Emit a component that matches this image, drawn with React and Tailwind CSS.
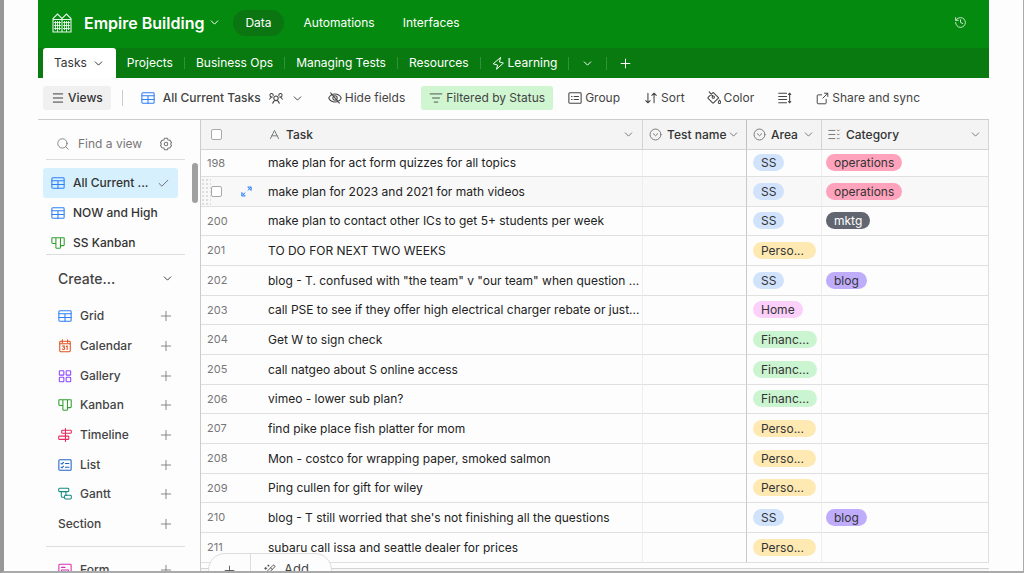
import React from 'react';
import { useState } from 'react';
import clsx from 'clsx';
import { Check, ChevronDown, History, ListFilter, Menu, Plus, Search, WandSparkles } from 'lucide-react';

const Svg = ({ size = 14, className, children }) => (
  <svg
    width={size}
    height={size}
    viewBox="0 0 16 16"
    fill="none"
    stroke="currentColor"
    strokeWidth="1.2"
    strokeLinecap="round"
    strokeLinejoin="round"
    className={clsx('shrink-0', className)}
    aria-hidden="true"
  >
    {children}
  </svg>
);

const BuildingIcon = () => (
  <svg width="20" height="20" viewBox="0 0 20 20" fill="none" stroke="currentColor" strokeWidth="1.1" className="shrink-0 opacity-90" aria-hidden="true">
    <path d="M1 19V5.500L5.500 1 10 5.500 14.500 1 19 5.500V19ZM10 5.500V19M1 6.500h18" />
    <path d="M3.500 8v9M5.500 8v11M7.500 8v9M12.500 8v9M14.500 8v11M16.500 8v9" strokeWidth="0.9" />
    <path d="M2 9.500h7M2 12.500h7M2 15.500h7M11 9.500h7M11 12.500h7M11 15.500h7" strokeWidth="0.9" />
  </svg>
);

const GridIcon = (props) => (
  <Svg {...props}>
    <rect x="1" y="2" width="14" height="12" rx="1" />
    <path d="M1 5.500h14M1 9.800h14M8 5.500V14" />
  </Svg>
);

const CalendarIcon = (props) => (
  <Svg {...props}>
    <rect x="2" y="2.500" width="12" height="12" rx="1" />
    <path d="M2 5.500h12M5 1v3M11 1v3M5 8h2.500L6.500 9.500c1.500 0 1.500 2.500-.2 2.500-.7 0-1.100-.2-1.300-.6M9.500 8.500l1-.7V12" />
  </Svg>
);

const GalleryIcon = (props) => (
  <Svg {...props}>
    <rect x="1.500" y="2" width="5.200" height="5" rx="0.800" />
    <rect x="9.300" y="2" width="5.200" height="5" rx="0.800" />
    <rect x="1.500" y="9.500" width="5.200" height="5" rx="0.800" />
    <rect x="9.300" y="9.500" width="5.200" height="5" rx="0.800" />
  </Svg>
);

const KanbanIcon = (props) => (
  <Svg {...props}>
    <path d="M1.500 2h13a.6.6 0 0 1 .6.6V10a1 1 0 0 1-1 1h-3.300V2M5.600 2v6.500H2a1 1 0 0 1-1-1V2.600A.6.6 0 0 1 1.500 2M5.600 8.500V13a1 1 0 0 0 1 1h3.200a1 1 0 0 0 1-1v-2" />
  </Svg>
);

const TimelineIcon = (props) => (
  <Svg {...props}>
    <path d="M8.500 .6v14.800M8.500 2.500H5a.8.8 0 0 0-.8.8v1.900a.8.8 0 0 0 .8.8h9.400a.8.8 0 0 0 .8-.8V3.300a.8.8 0 0 0-.8-.8H8.500" />
    <rect x="0.800" y="9.300" width="11.500" height="3.700" rx="0.800" />
  </Svg>
);

const ListIcon = (props) => (
  <Svg {...props}>
    <rect x="1" y="2" width="14" height="12" rx="1" />
    <path d="M3.500 6.200l1 .9 1.800-2M3.500 10.500l1 .9 1.800-2M8.500 6.300h4M8.500 10.500h4" />
  </Svg>
);

const GanttIcon = (props) => (
  <Svg {...props}>
    <rect x="0.800" y="1.500" width="11.500" height="3.800" rx="1" />
    <rect x="7.500" y="9.500" width="7.700" height="4.200" rx="1" />
    <path d="M3.800 5.300v5.300a1 1 0 0 0 1 1h2.700M9 5.300v3.200a1 1 0 0 0 1 1" />
  </Svg>
);

const FormIcon = (props) => (
  <Svg {...props}>
    <rect x="1" y="1.500" width="14" height="13" rx="1" />
    <path d="M4 5h4M4 8h8v3H4z" />
  </Svg>
);

const PeopleIcon = (props) => (
  <Svg {...props}>
    <circle cx="8" cy="8.300" r="2.500" />
    <path d="M4.300 14c.5-2 1.900-3.200 3.700-3.200s3.200 1.200 3.700 3.200M4.800 5.100A1.900 1.900 0 1 0 2.600 6.700M11.200 5.100a1.900 1.900 0 1 1 2.200 1.600M.8 9.300C1.300 7.600 2.200 6.800 3.900 6.800M15.200 9.300c-.5-1.700-1.400-2.500-3.100-2.500" />
  </Svg>
);

const HiddenIcon = (props) => (
  <Svg {...props}>
    <path d="M.8 8C2.300 5 4.900 3.400 8 3.400S13.700 5 15.200 8c-1.500 3-4.100 4.600-7.200 4.600S2.300 11 .8 8ZM3 2.200l10 11.600" />
    <circle cx="8" cy="8" r="2.500" />
  </Svg>
);

const GroupIcon = (props) => (
  <Svg {...props}>
    <rect x="1" y="2" width="14" height="12" rx="1" />
    <path d="M4 6.200h.7M7 6.200h5M4 9.700h.7M7 9.700h5" />
  </Svg>
);

const SortIcon = (props) => (
  <Svg {...props}>
    <path d="M4.500 2.500v11M2 11l2.500 2.500L7 11M11.500 13.500v-11M9 5l2.500-2.500L14 5" />
  </Svg>
);

const ColorIcon = (props) => (
  <Svg {...props}>
    <path d="M7.300 1.800l6 6L7.500 13.600a.8.8 0 0 1-1.100 0L1.300 8.500a.8.8 0 0 1 0-1.100l5.400-5.600a.5.5 0 0 1 .6 0ZM2.500 1l4 4.500" />
    <circle cx="7.200" cy="7" r="1.300" />
    <path d="M14.300 10.300c.9 1.300 1.300 2 1.300 2.700a1.300 1.300 0 0 1-2.600 0c0-.7.400-1.400 1.300-2.700Z" />
  </Svg>
);

const RowHeightIcon = (props) => (
  <Svg {...props}>
    <path d="M.8 2.500h9M.8 6.200h9M.8 9.800h9M.8 13.500h9M13.300 2.500v11M12 4l1.300-1.500L14.600 4M12 12l1.300 1.500 1.300-1.500" />
  </Svg>
);

const ShareIcon = (props) => (
  <Svg {...props}>
    <path d="M7 3.500H2.500a1 1 0 0 0-1 1v9a1 1 0 0 0 1 1h9a1 1 0 0 0 1-1V9M10.500 1.500h4v4M14.500 1.500L8.500 7.500" />
  </Svg>
);

const BoltIcon = (props) => (
  <Svg {...props}>
    <path d="M10.500 1L9 6l5 1.500L5.500 15 7 10 2 8.500Z" />
  </Svg>
);

const GearIcon = (props) => (
  <Svg {...props}>
    <path d="M6.300 1.500h3.400l.7 1.900 2 .2 1.900 2.800-1 1.600 1 1.700-1.900 2.700-2 .2-.7 1.900H6.300l-.7-1.900-2-.2-1.900-2.700 1-1.700-1-1.600 1.900-2.800 2-.2Z" />
    <circle cx="8" cy="8" r="2" />
  </Svg>
);

const SelectIcon = (props) => (
  <Svg {...props}>
    <circle cx="8" cy="8" r="6.700" />
    <path d="M5.300 7L8 9.600 10.700 7" />
  </Svg>
);

const MultiSelectIcon = (props) => (
  <Svg {...props}>
    <path d="M1 3h7.500M1 8h7.500M1 13h7.500M11.500 2.500l1.200 1.200 1.200-1.200M11.500 7.500l1.200 1.200 1.200-1.200M11.500 12.500l1.200 1.200 1.200-1.200" />
  </Svg>
);

const TextFieldIcon = (props) => (
  <Svg {...props}>
    <path d="M3 13L8 3l5 10M4.700 9.600h6.600" />
  </Svg>
);

const ExpandIcon = (props) => (
  <Svg {...props}>
    <path d="M10 2.500h3.800v3.800Z M13.300 3L9.800 6.500M6 13.500H2.200V9.700ZM2.700 13l3.500-3.500" />
  </Svg>
);

const Chevron = ({ size = 13, className }) => (
  <ChevronDown size={size} strokeWidth={1.8} className={clsx('shrink-0', className)} />
);

const tabs = ['Projects', 'Business Ops', 'Managing Tests', 'Resources'];

const views = [
  { name: 'All Current ...', icon: GridIcon, color: 'text-[#2d7ff9]' },
  { name: 'NOW and High', icon: GridIcon, color: 'text-[#2d7ff9]' },
  { name: 'SS Kanban', icon: KanbanIcon, color: 'text-[#2f9e2b]' },
];

const createItems = [
  { name: 'Grid', icon: GridIcon, color: 'text-[#2d7ff9]' },
  { name: 'Calendar', icon: CalendarIcon, color: 'text-[#e0501c]' },
  { name: 'Gallery', icon: GalleryIcon, color: 'text-[#8b46ff]' },
  { name: 'Kanban', icon: KanbanIcon, color: 'text-[#2f9e2b]' },
  { name: 'Timeline', icon: TimelineIcon, color: 'text-[#e5295f]' },
  { name: 'List', icon: ListIcon, color: 'text-[#1f62c9]' },
  { name: 'Gantt', icon: GanttIcon, color: 'text-[#168a85]' },
  { name: 'Section' },
];

const areas = {
  SS: 'bg-[#d0e2fc]',
  'Perso...': 'bg-[#ffe9b3] min-w-[63px]',
  'Financ...': 'bg-[#cbf5d1] min-w-[63px]',
  Home: 'bg-[#fbd0fb]',
};

const categories = {
  operations: 'bg-[#ffa3bd] text-[#333]',
  mktg: 'bg-[#616670] text-white',
  blog: 'bg-[#bfadfc] text-[#333]',
};

const rows = [
  { id: 198, task: 'make plan for act form quizzes for all topics', area: 'SS', category: 'operations' },
  { id: 199, task: 'make plan for 2023 and 2021 for math videos', area: 'SS', category: 'operations' },
  { id: 200, task: 'make plan to contact other ICs to get 5+ students per week', area: 'SS', category: 'mktg' },
  { id: 201, task: 'TO DO FOR NEXT TWO WEEKS', area: 'Perso...' },
  { id: 202, task: 'blog - T. confused with "the team" v "our team" when question ...', area: 'SS', category: 'blog' },
  { id: 203, task: 'call PSE to see if they offer high electrical charger rebate or just...', area: 'Home' },
  { id: 204, task: 'Get W to sign check', area: 'Financ...' },
  { id: 205, task: 'call natgeo about S online access', area: 'Financ...' },
  { id: 206, task: 'vimeo - lower sub plan?', area: 'Financ...' },
  { id: 207, task: 'find pike place fish platter for mom', area: 'Perso...' },
  { id: 208, task: 'Mon - costco for wrapping paper, smoked salmon', area: 'Perso...' },
  { id: 209, task: 'Ping cullen for gift for wiley', area: 'Perso...' },
  { id: 210, task: "blog - T still worried that she's not finishing all the questions", area: 'SS', category: 'blog' },
  { id: 211, task: 'subaru call issa and seattle dealer for prices', area: 'Perso...' },
];

const checkbox = 'block size-[11px] appearance-none rounded-[2px] border border-[#a8a8a8] bg-white checked:bg-[#2d7ff9]';

const Pill = ({ className, children }) => (
  <span className={clsx('block w-fit rounded-full px-2 text-[12px] leading-[17px]', className)}>
    {children}
  </span>
);

const TopBar = () => (
  <header className="flex h-12 items-center bg-[#048a0e] pr-[22px] pb-[3px] pl-[14px] text-[12px] text-white">
    <BuildingIcon />
    <button className="ml-3 flex items-center gap-1">
      <h1 className="text-[16px] font-semibold">Empire Building</h1>
      <Chevron />
    </button>
    <nav className="ml-3 flex items-center">
      <a href="#data" className="mr-5 rounded-full bg-[#0a7511] px-3 py-1 leading-[18px]">Data</a>
      <a href="#automations" className="mr-7">Automations</a>
      <a href="#interfaces">Interfaces</a>
    </nav>
    <button className="ml-auto" aria-label="History">
      <History size={13} strokeWidth={1.8} className="opacity-80" />
    </button>
  </header>
);

const TabBar = () => (
  <div className="flex h-[30px] items-center bg-[#097a0f] pl-[5px] text-[12px] text-white">
    <button className="flex h-full items-center gap-[5px] rounded-t-[3px] bg-white px-[11px] text-[#333]">
      Tasks
      <Chevron />
    </button>
    <div className="flex items-center divide-x divide-[#2f9435]">
      {tabs.map((tab) => (
        <button key={tab} className="px-[11px] leading-3">{tab}</button>
      ))}
      <button className="flex items-center gap-[3px] px-[11px] leading-3">
        <BoltIcon size={13} />
        Learning
      </button>
      <button className="px-3" aria-label="More tables"><Chevron /></button>
      <button className="px-[11px]" aria-label="Add table"><Plus size={15} strokeWidth={1.6} /></button>
    </div>
  </div>
);

const Toolbar = () => (
  <div className="flex h-[41px] items-center pb-px pl-[5px] text-[12px] text-[#444]">
    <button className="flex h-6 items-center gap-[3px] rounded-[3px] bg-[#f0f0f0] px-2 font-medium text-[#333]">
      <Menu size={14} strokeWidth={1.6} />
      Views
    </button>
    <div className="ml-[11px] h-4 w-px bg-[#ccc]" />
    <button className="ml-[18px] flex items-center gap-2 font-medium">
      <GridIcon className="text-[#2d7ff9]" />
      All Current Tasks
      <PeopleIcon />
      <Chevron />
    </button>
    <button className="ml-6 flex items-center gap-[3px]"><HiddenIcon />Hide fields</button>
    <button className="ml-4 flex h-6 items-center gap-[3px] rounded-[3px] bg-[#cff5d1] px-2">
      <ListFilter size={14} strokeWidth={1.5} />
      Filtered by Status
    </button>
    <button className="ml-[15px] flex items-center gap-[3px]"><GroupIcon />Group</button>
    <button className="ml-6 flex items-center gap-[3px]"><SortIcon />Sort</button>
    <button className="ml-[22px] flex items-center gap-[3px]"><ColorIcon />Color</button>
    <button className="ml-6" aria-label="Row height"><RowHeightIcon /></button>
    <button className="ml-6 flex items-center gap-[3px]"><ShareIcon size={13} />Share and sync</button>
  </div>
);

const CreateRow = ({ name, icon: Icon, color }) => (
  <li className="h-[30px] nth-[3n]:h-[29px]">
    <button className="flex h-full w-full items-center gap-2">
      {Icon && <Icon className={color} />}
      {name}
      <Plus size={16} strokeWidth={1.3} className="ml-auto text-[#777]" />
    </button>
  </li>
);

const Sidebar = () => {
  const [search, setSearch] = useState('');
  const [active, setActive] = useState(0);

  return (
    <aside className="relative w-[163px] shrink-0 overflow-hidden border-r border-[#ccc] text-[12px] text-[#444]">
      <div className="mr-[15px] ml-2 flex h-10 items-center border-b border-[#ddd] pt-2 pr-3 pl-[10px]">
        <Search size={14} strokeWidth={1.5} className="shrink-0 text-[#777]" />
        <input
          type="text"
          aria-label="Find a view"
          placeholder="Find a view"
          value={search}
          className="ml-2 w-0 flex-1 outline-none placeholder:text-[#777]"
          onChange={(e) => { setSearch(e.target.value) }}
        />
        <GearIcon className="text-[#777]" />
      </div>
      <ul className="mt-2 mr-[22px] ml-[5px] h-[86px] font-medium text-[#333]">
        {views.map(({ name, icon: Icon, color }, i) => (
          <li key={name} className="h-[30px] nth-[3n]:h-[29px]">
            <button
              onClick={() => setActive(i)}
              className={clsx('flex h-full w-full items-center gap-2 rounded-[3px] px-2 whitespace-nowrap', i === active && 'bg-[#d6f1fd]')}
            >
              <Icon className={color} />
              {name}
              {i === active && <Check size={13} strokeWidth={1.5} className="ml-auto shrink-0 text-[#555]" />}
            </button>
          </li>
        ))}
      </ul>
      {/* Create section */}
      <div className="mr-[15px] ml-2 border-y border-[#ddd] pr-[11px] pb-[7px] pl-3 font-medium">
        <button className="mb-[-1px] flex h-[47px] w-full items-center justify-between text-[14px]">
          Create...
          <Chevron />
        </button>
        <ul>
          {createItems.map((item) => (
            <CreateRow key={item.name} {...item} />
          ))}
        </ul>
      </div>
      <ul className="mr-[15px] ml-2 pt-2 pr-[11px] pl-3 font-medium">
        <CreateRow name="Form" icon={FormIcon} color="text-[#d62fb4]" />
      </ul>
      {/* scroll thumb */}
      <div className="absolute top-[43px] right-[2px] h-10 w-[6px] rounded-full bg-[#a0a0a0]" />
    </aside>
  );
};

const HeadCell = ({ icon: Icon, name, className }) => (
  <th className={clsx('border-r border-b border-[#d4d4d4] p-0 font-medium', className)}>
    <div className="flex items-center">
      <Icon size={13} className="mr-[5px] text-[#777]" />
      {name}
      <Chevron className="ml-auto text-[#777]" />
    </div>
  </th>
);

const TaskTable = () => (
  <table className="w-full table-fixed border-separate border-spacing-0 text-left text-[12px] text-[#222]">
    <colgroup>
      <col className="w-[67px]" />
      <col />
      <col className="w-[104px]" />
      <col className="w-[75px]" />
      <col className="w-[167px]" />
    </colgroup>
    <thead>
      <tr className="h-[30px] bg-[#f4f4f4] text-[#333]">
        <th className="border-b border-[#d4d4d4] p-0 pl-[10px]">
          <input type="checkbox" aria-label="Select all" className={checkbox} />
        </th>
        <HeadCell icon={TextFieldIcon} name="Task" className="pr-[7px]" />
        <HeadCell icon={SelectIcon} name="Test name" className="border-r-[#c2c2c2] pr-[6px] pl-[6px]" />
        <HeadCell icon={SelectIcon} name="Area" className="pr-[6px] pl-[6px]" />
        <HeadCell icon={MultiSelectIcon} name="Category" className="pr-[6px] pl-[6px]" />
      </tr>
    </thead>
    <tbody>
      {rows.map((row, i) => {
        const hovered = row.id === 199;
        return (
          <tr
            key={row.id}
            className={clsx(
              '*:border-b *:border-b-[#e0e0e0] *:p-0',
              i === 0 ? 'h-[27px]' : 'h-[30px] nth-[3n]:h-[29px]',
              hovered && 'bg-[#f8f8f8]',
            )}
          >
            <td className="text-[11px] text-[#777]">
              {hovered ? (
                <div className="flex items-center">
                  <div className="h-[27px] w-[10px] bg-[radial-gradient(#ddd_1px,transparent_1px)] bg-size-[4px_4px]" />
                  <input type="checkbox" aria-label="Select row 199" className={checkbox} />
                  <button className="ml-[18px] text-[#2d7ff9]" aria-label="Expand row"><ExpandIcon size={13} /></button>
                </div>
              ) : (
                <span className="pl-[6px]">{row.id}</span>
              )}
            </td>
            <td className="truncate border-r border-r-[#eee]">{row.task}</td>
            <td className="border-r border-r-[#c8c8c8]" />
            <td className="border-r border-r-[#eee]">
              <div className="pb-px pl-[6px] text-[#333]"><Pill className={areas[row.area]}>{row.area}</Pill></div>
            </td>
            <td className="border-r border-r-[#e0e0e0]">
              {row.category && (
                <div className="pb-px pl-1"><Pill className={categories[row.category]}>{row.category}</Pill></div>
              )}
            </td>
          </tr>
        );
      })}
    </tbody>
  </table>
);

const App = () => {
  return (
    <div className="flex h-screen flex-col overflow-hidden border-r border-b-2 border-l-4 border-r-[#aaa] border-b-[#aaa] border-l-[#979797] bg-[#fdfdfd] pr-[34px] pl-[34px] font-[Inter,sans-serif]">
      <TopBar />
      <TabBar />
      <Toolbar />
      <div className="flex min-h-0 flex-1 border-t border-[#ccc]">
        <Sidebar />
        <main className="relative flex min-w-0 flex-1 flex-col overflow-hidden">
          <TaskTable />
          <div className="mt-[5px] flex-1 border-t border-[#d4d4d4] bg-[#f7f7f7]" />
          {/* floating add bar, runs past the bottom edge */}
          <div className="absolute -bottom-4 left-[7px] flex h-[34px] w-[124px] rounded-full border border-[#ddd] bg-[#fdfdfd] text-[13px] text-[#444]">
            <button className="flex w-[42px] items-center justify-center border-r border-[#ddd]" aria-label="Add record">
              <Plus size={15} strokeWidth={1.3} />
            </button>
            <button className="flex items-center gap-2 pl-3">
              <WandSparkles size={13} strokeWidth={1.6} />
              Add
            </button>
          </div>
        </main>
      </div>
    </div>
  );
};

export default App;
